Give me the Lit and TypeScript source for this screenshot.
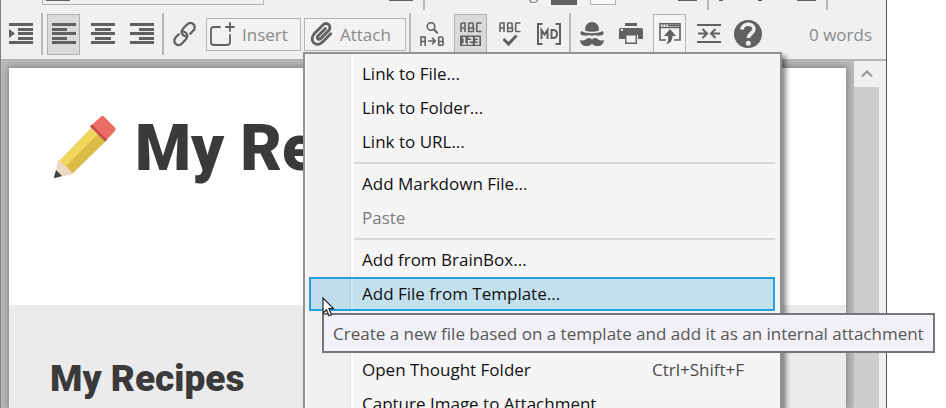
import { LitElement, html, css, svg } from "lit";
import { customElement } from "lit/decorators.js";
import { classMap } from "lit/directives/class-map.js";

type Tool = { icon: unknown; name: string; state?: string };
type Item = { label: string; keys?: string; disabled?: boolean; tip?: string };

const icon = (body: unknown, w = 24, h = 24) =>
  html`<svg width=${w} height=${h} viewBox="0 0 ${w} ${h}" fill="none" aria-hidden="true">${body}</svg>`;

const bars = (rows: number[][]) =>
  icon(svg`<g fill="#616161">${rows.map(([x, y, w]) => svg`<rect x=${x} y=${y} width=${w} height="3"/>`)}</g>`);

const abc = (lower: unknown) =>
  icon(svg`<g stroke="#616161" stroke-width="1.6"><path d="M2 10V2q0-1 1-1h3v9M2 6h4M9.700 1v8.500h4q.8 0 .8-.8V6H9.700M9.700 1h3.600q.8 0 .8.800V6M22.500 1h-4q-.8 0-.8.800v6.900q0 .8.800.8h4"/>${lower}</g>`);

const icons = {
  indent: icon(svg`<path fill="#616161" d="M0 1h24v3H0zM9 6h15v3H9zM9 10h15v3H9zM9 15h15v3H9zM0 19h24v3H0zM0 7l6 4.500L0 16z"/>`),
  left: bars([[0, 1, 24], [0, 6, 15], [0, 10, 24], [0, 15, 15], [0, 19, 24]]),
  center: bars([[0, 1, 24], [4, 6, 16], [0, 10, 24], [4, 15, 16], [0, 19, 24]]),
  right: bars([[0, 1, 24], [9, 6, 15], [0, 10, 24], [9, 15, 15], [0, 19, 24]]),
  link: icon(svg`<g stroke="#616161" stroke-width="2.3" stroke-linecap="round"><path d="M12.500 14.500C8.500 13.200 7.500 9.300 10 6.700l3.800-3.900c2.200-2.200 4.900-2.200 6.600-.6 1.800 1.700 1.700 4.600-.2 6.500l-3 3"/><path d="M10.500 9.500c4 1.300 5 5.200 2.500 7.800l-3.800 3.900c-2.200 2.200-4.900 2.200-6.600.6-1.800-1.700-1.700-4.600.2-6.500l3-3"/></g>`),
  insert: icon(svg`<path d="M10 5H4Q1 5 1 8v12q0 3 3 3h13q3 0 3-3v-7M20 1v8M16 5h8" stroke="#616161" stroke-width="1.8" stroke-linecap="round"/>`, 25, 25),
  attach: icon(svg`<path d="M15.500 6.500l-7.300 7.300c-1.200 1.300-1 2.400-.4 3 .8.700 2 .6 3-.4l7.700-7.700c2-2.100 1.800-4.600.3-6-1.700-1.500-4.200-1.300-6.100.6l-8.200 8.300c-3 3.100-2.900 7-.7 9.200 2.300 2.200 6 2 9-1l8-8" stroke="#616161" stroke-width="2.900" stroke-linecap="round"/>`),
  replace: icon(svg`<g stroke="#616161" stroke-width="1.600"><circle cx="11" cy="4.500" r="3.800"/><path d="M13.700 7.300l4 4" stroke-width="2"/><path d="M1 24v-9h4.200v9M1 19.500h4.200M18.700 15v8.200h3.400q1 0 1-1v-2.700h-4.400M18.700 15h3.100q1 0 1 1v3.500M8 19h7M12 15.700l3.300 3.300-3.300 3.300"/></g>`),
  count: abc(svg`<path d="M1 13.500h21v10.500H1z" fill="#616161" stroke="none"/><path d="M3.500 15.700h2v6.200M3 22h5M9.500 15.700h3.500v3h-3.300v3.200h4M16 15.700h3.500v6.200H16M16.500 18.700h3" stroke="#e4e4e4"/>`),
  spelling: abc(svg`<path d="M5.500 17l5 5 8-8.500" stroke-width="3"/>`),
  markdown: icon(svg`<g stroke="#616161" stroke-width="2"><path d="M5.500 2H1v20h4.500M18.500 2H23v20h-4.500"/><path d="M4.500 17V8l3 4.500L10.500 8v9M14.500 8v8h1.500q4 0 4-4t-4-4z"/></g>`),
  incognito: icon(svg`<g fill="#616161"><path d="M5 8.500Q5 0 12 0t7 8.500q-7 2.500-14 0z"/><path d="M1.500 9q3.500 2.200 10.500 2.200T22.500 9q2.500 2-.2 4-4.300 1.300-7.300 0-3 1.500-6 0-3 1.300-7.300 0-2.700-2-.2-4z"/><path d="M12 17.500q2-2 4.500-1.200c2.200 1 3 3.200 7.500 1.700-.5 4-3 6-6 6-2.600 0-5-.8-6-2.600-1 1.800-3.400 2.600-6 2.600-3 0-5.500-2-6-6 4.500 1.500 5.300-.7 7.500-1.700q2.500-.8 4.500 1.200z"/></g>`),
  print: icon(svg`<path d="M6 1h12v3H6zM2 6h20q2 0 2 2v9h-5v-4H6v4H0V8q0-2 2-2z" fill="#616161"/><path d="M2 7h2v2H2z" fill="#f0f0f0"/><path d="M6.700 12.700h10.600v8.600H6.700z" stroke="#616161" stroke-width="1.400" fill="#f0f0f0"/>`),
  popup: icon(svg`<path d="M8 18H2V1.700h20V18h-6M2 5.500h20M4.500 3.500h1M7.500 3.500h1M10 3.500h11" stroke="#616161" stroke-width="1.600"/><path d="M12 7l6 7h-3.500q0 7-6.500 8 3-3 2-8H6z" fill="#616161"/>`),
  collapse: icon(svg`<path d="M0 3h24M0 20h24M1 11.500h8M5.500 7l4.500 4.500L5.500 16M23 11.500h-8M18.500 7L14 11.500l4.500 4.500" stroke="#616161" stroke-width="2"/>`),
  help: icon(svg`<circle cx="14" cy="14" r="14" fill="#616161"/><path d="M8 9.500C8.500 2.500 20 2.500 20 9c0 4.500-5.500 4-5.500 9" stroke="#f0f0f0" stroke-width="3.600"/><circle cx="14.300" cy="23.300" r="2.500" fill="#f0f0f0"/>`, 28, 28),
};

@customElement("attach-menu")
class AttachMenu extends LitElement {
  static styles = css`
    :host {
      display: block; box-sizing: border-box; width: 479px; padding: 3px 5px 3px 4px;
      border: 2px solid #929292; color: #111; box-shadow: 4px 4px 5px rgba(0, 0, 0, 0.45);
      background: linear-gradient(90deg, #f5f5f5 2px, #f0f0f0 2px 45px, #e0e0e0 45px 46px, #fff 46px 48px, #f5f5f5 48px);
    }
    .group { margin: 0; padding: 0; list-style: none; }
    .group + .group::before { content: ""; display: block; height: 2px; margin: 3px 0 3px 45px; background: #d7d7d7; }
    li { position: relative; min-height: 34px; }
    button {
      box-sizing: border-box; display: flex; justify-content: space-between; align-items: center;
      width: 100%; height: 34px; padding: 0 29px 0 51px; border: 2px solid transparent;
      background: none; font: inherit; color: inherit; white-space: nowrap;
    }
    button:disabled { color: #7c7c7c; }
    .active { border-color: #26a0da; background: rgba(38, 160, 218, 0.24); }
    .keys { color: #4c4c4c; }
    .tip {
      position: absolute; z-index: 1; left: 13px; top: 36px; padding: 7px 9px 5px;
      border: 2px solid #767676; background: #f1f1f7; color: #585858; white-space: nowrap;
    }
    .pointer { position: absolute; z-index: 2; left: 13px; top: 20px; }
  `;
  groups: Item[][] = [
    [{ label: "Link to File..." }, { label: "Link to Folder..." }, { label: "Link to URL..." }],
    [{ label: "Add Markdown File..." }, { label: "Paste", disabled: true }],
    [
      { label: "Add from BrainBox..." },
      { label: "Add File from Template...", tip: "Create a new file based on a template and add it as an internal attachment" },
      { label: "" },
    ],
    [{ label: "Open Thought Folder", keys: "Ctrl+Shift+F" }, { label: "Capture Image to Attachment" }],
  ];
  item(i: Item) {
    return html`<li>
      ${i.label
        ? html`<button class=${classMap({ active: !!i.tip })} ?disabled=${i.disabled}>
            <span>${i.label}</span>${i.keys ? html`<span class="keys">${i.keys}</span>` : ""}
          </button>`
        : ""}
      ${i.tip
        ? html`<div class="tip" role="tooltip">${i.tip}</div>
            <svg class="pointer" width="14" height="21" viewBox="0 0 14 21" aria-hidden="true">
              <path d="M1 1v15l3.500-3.300 2.500 6 2.500-1-2.500-6h4.500z" fill="#fff" stroke="#222" stroke-width="1.200"/>
            </svg>`
        : ""}
    </li>`;
  }
  render() {
    return this.groups.map((g) => html`<ul class="group">${g.map((i) => this.item(i))}</ul>`);
  }
}

@customElement("tool-bar")
class ToolBar extends LitElement {
  static styles = css`
    :host { display: block; border-bottom: 2px solid #b4b4b4; background: #f0f0f0; color: #8a8a8a; }
    .upper { display: flex; align-items: flex-start; height: 13px; padding-left: 41px; }
    .upper > * { flex: none; box-sizing: border-box; }
    .combo { width: 222px; height: 5px; margin-right: 125px; padding-left: 3px; border: 1px solid #b4b4b4; border-top: 0; }
    .dash { width: 24px; height: 1px; background: #616161; }
    .short { width: 19px; }
    .dot { width: 4px; height: 1px; background: #616161; }
    .tick { width: 2px; height: 10px; margin: 0 10px; background: #b8b8b8; }
    .size { display: flex; align-items: flex-end; height: 3px; margin: 0 13px 0 94px; overflow: hidden; line-height: 20px; }
    .ink, .paper { width: 26px; height: 5px; background: #616161; }
    .paper { margin: 0 62px 0 13px; border: 1px solid #b4b4b4; border-top: 0; background: #f8f8f8; }
    .space { width: 35px; }
    .row { display: flex; align-items: center; height: 42px; padding: 0 14px 4px 0; }
    button {
      box-sizing: border-box; display: grid; place-items: center; flex: none; width: 33px; height: 41px;
      margin: 0 3px; padding: 0; border: 1px solid transparent; background: none; font: inherit; color: inherit;
    }
    .pressed { background: #dadada; border-color: #b0b0b0; }
    .outlined { border-color: #b4b4b4; background: #f4f4f4; }
    svg { display: block; overflow: visible; }
    .rule { flex: none; width: 2px; height: 42px; margin: 0 1px; background: #b8b8b8; }
    .files { position: relative; display: flex; gap: 3px; margin: 0 2px; }
    .wide {
      display: flex; align-items: center; gap: 7px; height: 33px; width: 95px;
      margin: 0; padding: 0 3px; border-color: #b4b4b4; background: #f2f2f2;
    }
    .attach { width: 102px; padding: 0 5px; gap: 6px; }
    attach-menu { position: absolute; z-index: 1; left: 97px; top: 34px; }
    .wide span, .words { padding-top: 2px; }
    .words { margin-left: auto; white-space: nowrap; }
  `;
  tools(list: Tool[]) {
    return list.map(
      (t) => html`<button class=${classMap({ [t.state ?? "plain"]: true })} aria-label=${t.name}>${t.icon}</button>`
    );
  }
  render() {
    const rule = html`<span class="rule"></span>`;
    return html`
      <div class="upper">
        <div class="combo"><div class="dash"></div></div>
        <i class="dash"></i><i class="tick"></i>
        <span class="size">g</span>
        <i class="ink"></i><i class="paper"></i>
        <i class="dash short"></i><i class="tick"></i>
        <i class="dot"></i><i class="space"></i><i class="dot"></i><i class="space"></i>
        <i class="dash short"></i><i class="tick"></i>
      </div>
      <div class="row">
        ${this.tools([{ icon: icons.indent, name: "Indent" }])}
        ${rule}
        ${this.tools([
          { icon: icons.left, name: "Align left", state: "pressed" },
          { icon: icons.center, name: "Align center" },
          { icon: icons.right, name: "Align right" },
        ])}
        ${rule}
        ${this.tools([{ icon: icons.link, name: "Link" }])}
        <div class="files">
          <button class="wide">${icons.insert}<span>Insert</span></button>
          <button class="wide attach" aria-expanded="true">${icons.attach}<span>Attach</span></button>
          <attach-menu></attach-menu>
        </div>
        ${rule}
        ${this.tools([
          { icon: icons.replace, name: "Replace" },
          { icon: icons.count, name: "Word count", state: "pressed" },
          { icon: icons.spelling, name: "Spelling" },
          { icon: icons.markdown, name: "Markdown" },
        ])}
        ${rule}
        ${this.tools([
          { icon: icons.incognito, name: "Incognito" },
          { icon: icons.print, name: "Print" },
          { icon: icons.popup, name: "Pop out", state: "outlined" },
          { icon: icons.collapse, name: "Collapse" },
          { icon: icons.help, name: "Help" },
        ])}
        <span class="words">0 words</span>
      </div>`;
  }
}

@customElement("note-page")
class NotePage extends LitElement {
  static styles = css`
    :host { display: flex; min-height: 0; padding-right: 7px; background: #f0f0f0; }
    .desk { flex: 1; display: flex; min-width: 0; padding: 7px 8px 0; background: #bcbcbc; overflow: hidden; }
    .sheet { flex: 1; min-width: 0; background: #ebebeb; box-shadow: 0 0 8px 1px rgba(0, 0, 0, 0.35); font-family: Roboto, sans-serif; color: #3a3a3a; }
    header { box-sizing: border-box; display: flex; gap: 17px; height: 237px; padding: 43px 0 0 44px; background: #fff; }
    h1, h2 { margin: 0; font-weight: 900; white-space: nowrap; }
    h1 { font-size: 64px; line-height: 76px; }
    h2 { padding: 51px 0 0 41px; font-size: 37px; line-height: 46px; }
    .pencil { flex: none; margin-top: 4px; }
    .scroll { width: 25px; background: #cdcdcd; }
    .scroll button { display: grid; place-items: center; width: 25px; height: 26px; padding: 0; border: 0; background: #f0f0f0; }
  `;
  render() {
    return html`
      <div class="desk">
        <article class="sheet">
          <header>
            <svg class="pencil" width="65" height="65" viewBox="0 0 65 65" aria-hidden="true">
              <path d="M38 13L6 46l7 7 32-33z" fill="#f0d65c"/>
              <path d="M45 19L13 51l6 8 35-34z" fill="#d9bb45"/>
              <path d="M5 45l7 6 8 8-18 4z" fill="#ecd8c3"/>
              <path d="M3 55l6 6-7 2q-1 0-1-1z" fill="#424242"/>
              <path d="M48 1.500Q49.500 0 51 1.500L62 12.500q1.500 1.500 0 3.500L52 26.500 37 11.500z" fill="#e96d62"/>
              <path d="M39 9.500L54 24.500l-2 2L37 11.500z" fill="#c94f4b"/>
            </svg>
            <h1>My Recipes</h1>
          </header>
          <h2>My Recipes</h2>
        </article>
      </div>
      <div class="scroll">
        <button aria-label="Scroll up">
          <svg width="12" height="8" viewBox="0 0 12 8"><path d="M1 6.500l5-5 5 5" fill="none" stroke="#929292" stroke-width="2"/></svg>
        </button>
      </div>`;
  }
}

@customElement("app-root")
class AppRoot extends LitElement {
  static styles = css`
    :host { display: flex; height: 100vh; overflow: hidden; background: #fff; font: 17px/24px "Open Sans", "Noto Sans", sans-serif; }
    .window { flex: 1; display: flex; flex-direction: column; min-width: 0; margin-right: 59px; border: solid #555; border-width: 0 1px; border-left-color: #808080; }
    tool-bar { position: relative; z-index: 1; }
    note-page { flex: 1; }
  `;
  render() {
    return html`<main class="window"><tool-bar></tool-bar><note-page></note-page></main>`;
  }
}
